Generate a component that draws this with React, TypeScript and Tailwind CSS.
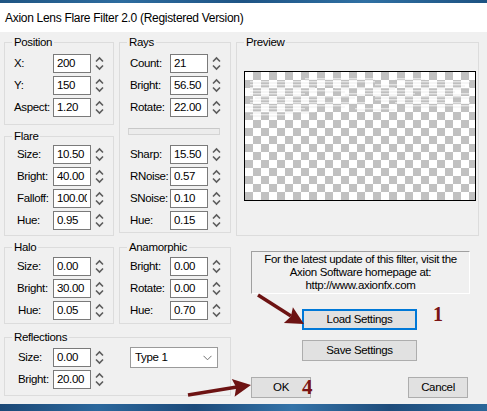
import React from "react";

type RowProps = {
  label: string;
  value: string;
  lw: string;
  children?: React.ReactNode;
};

function Spin() {
  return (
    <svg width="9" height="19" viewBox="0 0 9 19" className="ml-[4px] shrink-0">
      <path d="M1 7.5 L4.5 4 L8 7.5" fill="none" stroke="#5c5c5c" strokeWidth="1.6" />
      <path d="M1 11.5 L4.5 15 L8 11.5" fill="none" stroke="#5c5c5c" strokeWidth="1.6" />
    </svg>
  );
}

function Row({ label, value, lw, children }: RowProps) {
  return (
    <div className="flex items-center h-[19px]">
      <div className={`${lw} shrink-0 whitespace-nowrap`}>{label}</div>
      <div className="w-[38px] h-[19px] shrink-0 border border-[#7a7a7a] bg-white pl-[3px] leading-[17px]">
        <div className="w-[30px] overflow-hidden whitespace-nowrap">{value}</div>
      </div>
      <Spin />
      {children}
    </div>
  );
}

function Group({ title, className, children }: { title: string; className: string; children: React.ReactNode }) {
  return (
    <fieldset className={`min-w-0 border border-[#dcdcdc] ${className}`}>
      <legend className="ml-[7px] px-[2px] leading-[13px]">{title}</legend>
      {children}
    </fieldset>
  );
}

// flare streaks across the preview, [y, x1, x2] inside the image
const streaks: [number, number, number][] = [
  [6, 60, 130], [6, 150, 180],
  [9, 5, 130], [9, 160, 225],
  [12, 5, 110], [12, 130, 220],
  [15, 5, 70], [15, 90, 150], [15, 160, 225],
  [18, 5, 100], [18, 120, 210],
  [21, 5, 60], [21, 100, 170], [21, 180, 225],
  [24, 10, 110], [24, 130, 225],
  [27, 5, 80], [27, 130, 200],
  [30, 5, 120], [30, 150, 225],
  [33, 0, 100], [33, 160, 228],
  [36, 5, 60], [36, 110, 150],
  [39, 0, 70],
  [42, 5, 40],
];

function Preview() {
  return (
    <svg width="232" height="130" className="block">
      <defs>
        <pattern id="chk" width="16" height="16" patternUnits="userSpaceOnUse" x="1" y="1">
          <rect width="16" height="16" fill="#ffffff" />
          <rect x="8" width="8" height="8" fill="#c1c1c1" />
          <rect y="8" width="8" height="8" fill="#c1c1c1" />
        </pattern>
      </defs>
      <rect x="0.5" y="0.5" width="231" height="129" fill="url(#chk)" stroke="#000" />
      {streaks.map(([y, a, b], i) => (
        <g key={i}>
          <rect x={1 + a} y={1 + y} width={b - a} height="1.5" fill="#ffffff" opacity="0.55" />
          <rect x={1 + a} y={2.5 + y} width={b - a} height="1" fill="#b8b8b8" opacity="0.25" />
        </g>
      ))}
    </svg>
  );
}

export default function App() {
  return (
    <div className="relative w-[487px] h-[411px] overflow-hidden bg-[#f0f0f0] font-['Liberation_Sans',Arial,sans-serif] text-black text-[11.5px] tracking-[-0.35px]">
      <div className="h-[3px] bg-[linear-gradient(90deg,#1f5583,#2d6c9f,#1e5485,#2f70a3,#1d5282)]" />
      <div className="h-[29px] bg-white flex items-center pl-[5px] text-[12px] tracking-[-0.3px]">
        Axion Lens Flare Filter 2.0 (Registered Version)
      </div>

      <div className="h-[372px] flex pt-[4px] pl-[4px]">
        {/* left: parameter groups */}
        <div className="w-[227px] flex flex-col shrink-0">
          <div className="flex items-start gap-[5px]">
            <div className="w-[110px] flex flex-col gap-[5px]">
              <Group title="Position" className="pb-[7px]">
                <div className="mt-[5px] flex flex-col gap-[3px]">
                  <Row label="X:" value="200" lw="w-[48px] pl-[9px]" />
                  <Row label="Y:" value="150" lw="w-[48px] pl-[9px]" />
                  <Row label="Aspect:" value="1.20" lw="w-[48px] pl-[9px]" />
                </div>
              </Group>
              <Group title="Flare" className="pb-[5px]">
                <div className="mt-[2px] flex flex-col gap-[3px]">
                  <Row label="Size:" value="10.50" lw="w-[48px] pl-[12px]" />
                  <Row label="Bright:" value="40.00" lw="w-[48px] pl-[12px]" />
                  <Row label="Falloff:" value="100.00" lw="w-[48px] pl-[12px]" />
                  <Row label="Hue:" value="0.95" lw="w-[48px] pl-[12px]" />
                </div>
              </Group>
            </div>
            <Group title="Rays" className="w-[112px] pb-[2px]">
              <div className="mt-[5px] flex flex-col gap-[3px]">
                <Row label="Count:" value="21" lw="w-[50px] pl-[10px]" />
                <Row label="Bright:" value="56.50" lw="w-[50px] pl-[10px]" />
                <Row label="Rotate:" value="22.00" lw="w-[50px] pl-[10px]" />
              </div>
              <div className="mt-[11px] ml-[8px] w-[92px] h-[7px] border border-[#d4d4d4] border-t-[#c8c8c8] bg-[#ececec]" />
              <div className="mt-[10px] flex flex-col gap-[3px]">
                <Row label="Sharp:" value="15.50" lw="w-[50px] pl-[10px]" />
                <Row label="RNoise:" value="0.57" lw="w-[50px] pl-[10px]" />
                <Row label="SNoise:" value="0.10" lw="w-[50px] pl-[10px]" />
                <Row label="Hue:" value="0.15" lw="w-[50px] pl-[10px]" />
              </div>
            </Group>
          </div>

          <div className="mt-[5px] flex items-start gap-[5px]">
            <Group title="Halo" className="w-[110px] pb-[3px]">
              <div className="mt-[3px] flex flex-col gap-[3px]">
                <Row label="Size:" value="0.00" lw="w-[48px] pl-[12px]" />
                <Row label="Bright:" value="30.00" lw="w-[48px] pl-[12px]" />
                <Row label="Hue:" value="0.05" lw="w-[48px] pl-[13px]" />
              </div>
            </Group>
            <Group title="Anamorphic" className="w-[112px] pb-[3px]">
              <div className="mt-[3px] flex flex-col gap-[3px]">
                <Row label="Bright:" value="0.00" lw="w-[50px] pl-[10px]" />
                <Row label="Rotate:" value="0.00" lw="w-[50px] pl-[10px]" />
                <Row label="Hue:" value="0.70" lw="w-[50px] pl-[10px]" />
              </div>
            </Group>
          </div>

          <Group title="Reflections" className="mt-[7px] pb-[6px]">
            <div className="mt-[4px] flex flex-col gap-[3px]">
              <Row label="Size:" value="0.00" lw="w-[48px] pl-[13px]">
                <div className="ml-[26px] w-[88px] h-[21px] shrink-0 border border-[#9a9a9a] bg-white flex items-center justify-between pl-[4px] pr-[5px]">
                  <span>Type 1</span>
                  <svg width="9" height="6" viewBox="0 0 9 6">
                    <path d="M0.5 0.8 L4.5 4.8 L8.5 0.8" fill="none" stroke="#707070" strokeWidth="1" />
                  </svg>
                </div>
              </Row>
              <Row label="Bright:" value="20.00" lw="w-[48px] pl-[13px]" />
            </div>
          </Group>
        </div>

        {/* right: preview and buttons */}
        <div className="w-[243px] ml-[5px] flex flex-col shrink-0">
          <Group title="Preview" className="pb-[34px]">
            <div className="mt-[22px] ml-[7px]">
              <Preview />
            </div>
          </Group>

          <div className="mt-[15px] ml-[15px] w-[219px] h-[43px] border border-[#a0a0a0] border-r-white border-b-white pt-[1px] text-center leading-[13px]">
            <div>For the latest update of this filter, visit the</div>
            <div>Axion Software homepage at:</div>
            <div>http://www.axionfx.com</div>
          </div>

          <button className="mt-[15px] ml-[66px] w-[115px] h-[21px] border-2 border-[#0078d7] bg-[#e1e1e1] flex items-center justify-center">
            Load Settings
          </button>
          <button className="mt-[10px] ml-[66px] w-[115px] h-[21px] border border-[#adadad] bg-[#e1e1e1] flex items-center justify-center">
            Save Settings
          </button>

          <div className="mt-[16px] ml-[15px] flex">
            <button className="w-[60px] h-[21px] border border-[#adadad] bg-[#e1e1e1] flex items-center justify-center">
              OK
            </button>
            <button className="ml-[97px] w-[60px] h-[21px] border border-[#adadad] bg-[#e1e1e1] flex items-center justify-center">
              Cancel
            </button>
          </div>
        </div>
      </div>

      <div className="h-[7px] bg-[linear-gradient(90deg,#1b4876,#2b679c,#1c4a7a,#3473a8,#1e4c7b,#2a6699)]" />

      {/* tutorial annotations drawn over the dialog */}
      <svg width="487" height="411" className="absolute left-0 top-0 pointer-events-none">
        <line x1="258" y1="295" x2="291" y2="316" stroke="#6d1313" strokeWidth="3.5" />
        <polygon points="304,324 283.9,322.9 290.9,316.5 292.9,307.3" fill="#6d1313" />
        <line x1="188" y1="395" x2="237" y2="387" stroke="#6d1313" strokeWidth="3.5" />
        <polygon points="251,385 234.6,396.7 236.2,387.3 231.8,378.9" fill="#6d1313" />
      </svg>
      <div className="absolute left-[433px] top-[304px] font-['Liberation_Serif',serif] font-bold text-[20px] leading-none tracking-normal text-[#7a1414]">
        1
      </div>
      <div className="absolute left-[302px] top-[377px] font-['Liberation_Serif',serif] font-bold text-[21px] leading-none tracking-normal text-[#7a1414]">
        4
      </div>
    </div>
  );
}
